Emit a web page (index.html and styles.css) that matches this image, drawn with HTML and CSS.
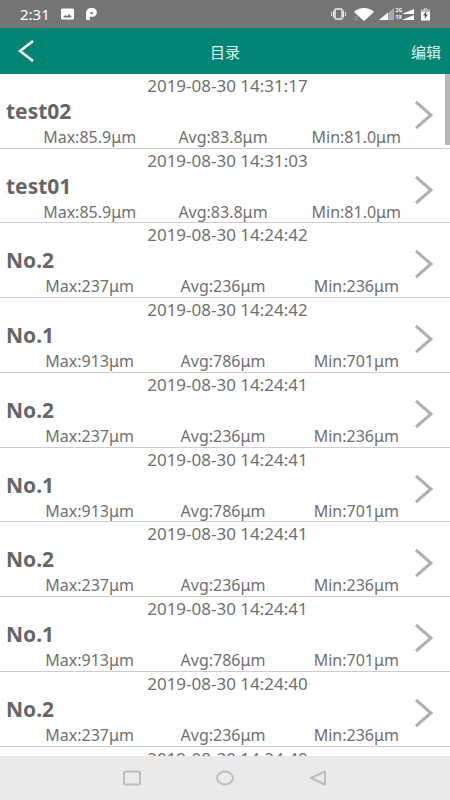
FILE: index.html
```html
<!DOCTYPE html>
<html lang="zh-CN">
<head>
    <meta charset="UTF-8">
    <meta name="viewport" content="width=device-width, initial-scale=1.0">
    <title>目录</title>
    <link rel="stylesheet" href="styles.css">
</head>
<body>
    <div class="status-bar">
        <span class="clock">2:31</span>
        <svg class="picture-icon" width="13" height="12" viewBox="0 0 13 12">
            <path fill="#fff" fill-rule="evenodd" d="M1.500 0.500h10A1.500 1.500 0 0 1 13 2v8a1.500 1.500 0 0 1-1.500 1.500h-10A1.500 1.500 0 0 1 0 10v-8A1.500 1.500 0 0 1 1.500 .5zM2 9.500h9L8.300 6 6 8.300 4.300 7z"/>
        </svg>
        <svg class="parking-icon" width="11" height="12" viewBox="0 0 11 12">
            <path fill="#fff" fill-rule="evenodd" d="M0 11V5a5 5 0 0 1 5-5h1.500a4.300 4.300 0 0 1 0 8.700H4V11a1 1 0 0 1-1 1H1a1 1 0 0 1-1-1zM4.500 4v2H6a1 1 0 0 0 0-2z"/>
        </svg>
        <div class="signals">
            <svg width="15" height="12" viewBox="0 0 15 12">
                <g fill="none" stroke="#eee">
                    <rect x="4" y="1" width="7" height="10" rx="1" stroke-width="1.500"/>
                    <path d="M2.500 2.500v7M12.500 2.500v7M.5 4v1.500L1 6l-.5.5V8M14.500 4v1.500L14 6l.5.5V8"/>
                </g>
            </svg>
            <svg class="wifi-icon" width="20" height="13" viewBox="0 0 20 13">
                <path fill="#fff" d="M0 4C5-1.300 15-1.300 20 4l-10 9z"/>
                <path fill="#aaa" d="M0 9.500l2-1.500 2 1.500zM0 11l2 1.500L4 11z"/>
            </svg>
            <svg width="15" height="12" viewBox="0 0 15 12">
                <path fill="#aaa" d="M9 5l6-5v12H9z"/>
                <path fill="#fff" d="M0 12l9-7.500V12z"/>
            </svg>
            <span class="network"><span>2G</span><span>1X</span></span>
            <svg width="12" height="13" viewBox="0 0 12 13">
                <path fill="#fff" d="M0 6l12-5v5zM0 12l12-5v5z"/>
            </svg>
            <svg class="battery-icon" width="9" height="13" viewBox="0 0 9 13">
                <path fill="#bbb" d="M3 0h3v1.500h3V5H0V1.500h3z"/>
                <path fill="#fff" d="M0 4h9v8.500H0z"/>
                <path fill="#555" d="M5.500 3L2 7.500h2L3.500 11 7 6.500H5z"/>
            </svg>
        </div>
    </div>

    <header class="header">
        <button class="back" aria-label="返回">
            <svg width="16" height="22" viewBox="0 0 16 22">
                <path fill="none" stroke="#fff" stroke-width="2.500" d="M15 1L2 11l13 10"/>
            </svg>
        </button>
        <h1>目录</h1>
        <button class="edit">编辑</button>
    </header>

    <main class="content">
        <div class="list">
            <a class="record" href="#">
                <span class="date">2019-08-30 14:31:17</span>
                <strong class="name">test02</strong>
                <span class="values"><span>Max:85.9μm</span><span>Avg:83.8μm</span><span>Min:81.0μm</span></span>
                <svg class="arrow" viewBox="0 0 20 30"><path d="M2 2l15 13L2 28"/></svg>
            </a>
            <a class="record" href="#">
                <span class="date">2019-08-30 14:31:03</span>
                <strong class="name">test01</strong>
                <span class="values"><span>Max:85.9μm</span><span>Avg:83.8μm</span><span>Min:81.0μm</span></span>
                <svg class="arrow" viewBox="0 0 20 30"><path d="M2 2l15 13L2 28"/></svg>
            </a>
            <a class="record" href="#">
                <span class="date">2019-08-30 14:24:42</span>
                <strong class="name">No.2</strong>
                <span class="values"><span>Max:237μm</span><span>Avg:236μm</span><span>Min:236μm</span></span>
                <svg class="arrow" viewBox="0 0 20 30"><path d="M2 2l15 13L2 28"/></svg>
            </a>
            <a class="record" href="#">
                <span class="date">2019-08-30 14:24:42</span>
                <strong class="name">No.1</strong>
                <span class="values"><span>Max:913μm</span><span>Avg:786μm</span><span>Min:701μm</span></span>
                <svg class="arrow" viewBox="0 0 20 30"><path d="M2 2l15 13L2 28"/></svg>
            </a>
            <a class="record" href="#">
                <span class="date">2019-08-30 14:24:41</span>
                <strong class="name">No.2</strong>
                <span class="values"><span>Max:237μm</span><span>Avg:236μm</span><span>Min:236μm</span></span>
                <svg class="arrow" viewBox="0 0 20 30"><path d="M2 2l15 13L2 28"/></svg>
            </a>
            <a class="record" href="#">
                <span class="date">2019-08-30 14:24:41</span>
                <strong class="name">No.1</strong>
                <span class="values"><span>Max:913μm</span><span>Avg:786μm</span><span>Min:701μm</span></span>
                <svg class="arrow" viewBox="0 0 20 30"><path d="M2 2l15 13L2 28"/></svg>
            </a>
            <a class="record" href="#">
                <span class="date">2019-08-30 14:24:41</span>
                <strong class="name">No.2</strong>
                <span class="values"><span>Max:237μm</span><span>Avg:236μm</span><span>Min:236μm</span></span>
                <svg class="arrow" viewBox="0 0 20 30"><path d="M2 2l15 13L2 28"/></svg>
            </a>
            <a class="record" href="#">
                <span class="date">2019-08-30 14:24:41</span>
                <strong class="name">No.1</strong>
                <span class="values"><span>Max:913μm</span><span>Avg:786μm</span><span>Min:701μm</span></span>
                <svg class="arrow" viewBox="0 0 20 30"><path d="M2 2l15 13L2 28"/></svg>
            </a>
            <a class="record" href="#">
                <span class="date">2019-08-30 14:24:40</span>
                <strong class="name">No.2</strong>
                <span class="values"><span>Max:237μm</span><span>Avg:236μm</span><span>Min:236μm</span></span>
                <svg class="arrow" viewBox="0 0 20 30"><path d="M2 2l15 13L2 28"/></svg>
            </a>
            <a class="record" href="#">
                <span class="date">2019-08-30 14:24:40</span>
            </a>
        </div>
        <div class="scrollbar"></div>
    </main>

    <nav class="nav-bar">
        <button aria-label="最近任务">
            <svg width="18" height="16" viewBox="0 0 18 16"><rect x="1" y="1.500" width="16" height="13" rx="1.500"/></svg>
        </button>
        <button aria-label="主页">
            <svg width="18" height="16" viewBox="0 0 18 16"><ellipse cx="9" cy="8" rx="8" ry="6.500"/></svg>
        </button>
        <button aria-label="返回上一页">
            <svg width="18" height="16" viewBox="0 0 18 16"><path d="M16 1.500v13L2 8z"/></svg>
        </button>
    </nav>
</body>
</html>
```
FILE: styles.css
```css
* {
    box-sizing: border-box;
}
body {
    font-family: "Noto Sans", "Noto Sans CJK SC", sans-serif;
    display: flex;
    flex-direction: column;
    height: 100vh;
    margin: 0;
    background: #fff;
    color: #666;
}
button {
    display: flex;
    align-items: center;
    padding: 0;
    border: none;
    background: none;
    font-family: inherit;
    cursor: pointer;
}
.status-bar {
    display: flex;
    align-items: center;
    flex-shrink: 0;
    height: 28px;
    padding: 0 20px;
    background: #757575;
    color: #fff;
}
.clock {
    font-size: 15px;
    line-height: 28px;
}
.picture-icon {
    margin-left: 11px;
}
.parking-icon {
    margin-left: 12px;
}
.signals {
    display: flex;
    align-items: center;
    margin-left: auto;
}
.wifi-icon {
    margin: 0 5px 0 8px;
}
.network {
    display: flex;
    flex-direction: column;
    margin-left: 2px;
    font-size: 5px;
    font-weight: 700;
    line-height: 7px;
}
.battery-icon {
    margin-left: 7px;
}
.header {
    display: grid;
    grid-template-columns: 1fr auto 1fr;
    align-items: center;
    flex-shrink: 0;
    height: 46px;
    padding: 0 9px 0 18px;
    background: #038475;
    color: #e0f5f2;
}
.header h1 {
    margin: 0 9px 0 0;
    font-size: 15px;
    font-weight: 400;
}
.edit {
    justify-self: end;
    color: inherit;
    font-size: 15px;
}
.content {
    position: relative;
    flex: 1;
    min-height: 0;
}
.list {
    height: 100%;
    overflow: hidden;
}
.record {
    display: grid;
    grid-template-columns: 1fr 36px;
    grid-template-rows: 22px 30px 21px;
    min-height: 10.96%;
    border-bottom: 1px solid #ccc;
    color: #707070;
    text-decoration: none;
}
.date {
    grid-area: 1 / 1 / 2 / 3;
    padding-left: 5px;
    font-size: 17px;
    line-height: 23px;
    text-align: center;
}
.name {
    grid-area: 2 / 1;
    padding-left: 6px;
    color: #666;
    font-size: 21px;
    line-height: 30px;
}
.values {
    grid-area: 3 / 1 / 4 / 3;
    display: grid;
    grid-template-columns: repeat(3, 1fr);
    padding: 0 27px 0 23px;
    font-size: 16px;
    line-height: 23px;
    text-align: center;
}
.arrow {
    grid-area: 1 / 2 / 4 / 3;
    align-self: center;
    width: 20px;
    height: 30px;
    margin-top: 9px;
    fill: none;
    stroke: #b0b0b0;
    stroke-width: 3;
}
.scrollbar {
    position: absolute;
    top: 0;
    right: 0;
    width: 5px;
    height: 71px;
    background: #b8b8b8;
}
.nav-bar {
    display: flex;
    justify-content: center;
    gap: 75px;
    flex-shrink: 0;
    height: 44px;
    background: #eaeaea;
}
.nav-bar svg {
    fill: none;
    stroke: #bdbdbd;
    stroke-width: 2;
    stroke-linejoin: round;
}
```
